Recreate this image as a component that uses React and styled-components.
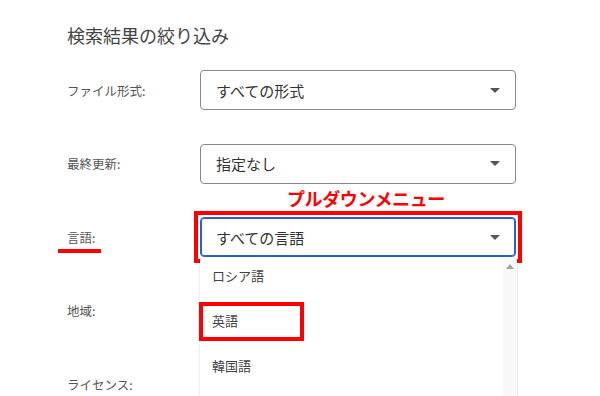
import React from "react";
import styled, { createGlobalStyle } from "styled-components";

const GlobalStyle = createGlobalStyle`
  html, body {
    margin: 0;
    padding: 0;
    background: #fff;
    overflow: hidden;
  }
  body {
    font-family: "Noto Sans CJK JP", "Noto Sans", sans-serif;
  }
`;

const Page = styled.div`
  width: 600px;
  height: 396px;
  padding: 22px 0 0 67px;
  box-sizing: border-box;
  overflow: hidden;
`;

const Title = styled.h2`
  margin: 0 0 22px;
  font-size: 18px;
  line-height: 26px;
  font-weight: 400;
  color: #444;
`;

const Form = styled.div`
  display: flex;
  flex-direction: column;
  gap: 33.5px;
`;

const Row = styled.div`
  display: grid;
  grid-template-columns: 133px 316px;
  align-items: center;
  height: 40px;
`;

const Label = styled.span`
  position: relative;
  font-size: 12.5px;
  color: #555;

  ${(p) =>
    p.$marked &&
    `
    &::after {
      content: "";
      position: absolute;
      left: -9px;
      width: 43px;
      top: 21px;
      height: 4px;
      background: #f00;
    }
  `}
`;

const SelectWrap = styled.div`
  position: relative;
  height: 40px;
  ${(p) =>
    p.$annotated &&
    `
    outline: 4px solid #f00;
    outline-offset: 2px;
  `}
`;

const Select = styled.div`
  height: 100%;
  box-sizing: border-box;
  display: flex;
  align-items: center;
  justify-content: space-between;
  padding: 0 15px 0 15px;
  border: 1px solid ${(p) => (p.$focused ? "#2b5fd6" : "#8a8a8a")};
  box-shadow: ${(p) => (p.$focused ? "inset 0 0 0 1px #2b5fd6" : "none")};
  border-radius: 4px;
  background: #fff;
  font-size: 15px;
  color: #333;
`;

const Caret = styled.span`
  width: 0;
  height: 0;
  border-left: 5px solid transparent;
  border-right: 5px solid transparent;
  border-top: 5px solid #555;
  margin-right: 0;
`;

const Callout = styled.div`
  position: absolute;
  left: 87px;
  bottom: 100%;
  margin-bottom: 8px;
  font-size: 18px;
  font-weight: 700;
  line-height: 22px;
  letter-spacing: -0.4px;
  color: #f00;
  white-space: nowrap;
`;

const Menu = styled.div`
  position: absolute;
  top: calc(100% + 1px);
  left: 0;
  width: 317px;
  height: 140px;
  background: #fff;
  box-shadow: -1px 0 2px rgba(0, 0, 0, 0.08);
  display: flex;
  z-index: 2;
`;

const Options = styled.ul`
  list-style: none;
  margin: 0;
  padding: 0;
  flex: 1;
`;

const Option = styled.li`
  position: relative;
  height: 45px;
  box-sizing: border-box;
  padding: 9px 0 0 12px;
  font-size: 13px;
  line-height: 18px;
  color: #444;

  ${(p) =>
    p.$marked &&
    `
    &::after {
      content: "";
      position: absolute;
      left: -1px;
      top: -1px;
      width: 105px;
      height: 39px;
      box-sizing: border-box;
      border: 4px solid #f00;
    }
  `}
`;

const Scrollbar = styled.div`
  width: 14px;
  background: #f8f8f8;
  box-shadow: 1px 0 1px rgba(0, 0, 0, 0.06);
  display: flex;
  justify-content: center;
  padding-top: 6px;
  box-sizing: border-box;
`;

const UpArrow = styled.span`
  width: 0;
  height: 0;
  border-left: 4px solid transparent;
  border-right: 4px solid transparent;
  border-bottom: 5px solid #a3a3a3;
`;

const languages = ["ロシア語", "英語", "韓国語"];

export default function App() {
  return (
    <>
      <GlobalStyle />
      <Page>
        <Title>検索結果の絞り込み</Title>
        <Form>
          <Row>
            <Label>ファイル形式:</Label>
            <SelectWrap>
              <Select>
                すべての形式
                <Caret />
              </Select>
            </SelectWrap>
          </Row>
          <Row>
            <Label>最終更新:</Label>
            <SelectWrap>
              <Select>
                指定なし
                <Caret />
              </Select>
            </SelectWrap>
          </Row>
          <Row>
            <Label $marked>言語:</Label>
            <SelectWrap $annotated>
              <Callout>プルダウンメニュー</Callout>
              <Select $focused>
                すべての言語
                <Caret />
              </Select>
              <Menu>
                <Options>
                  {languages.map((l) => (
                    <Option key={l} $marked={l === "英語"}>
                      {l}
                    </Option>
                  ))}
                </Options>
                <Scrollbar>
                  <UpArrow />
                </Scrollbar>
              </Menu>
            </SelectWrap>
          </Row>
          <Row>
            <Label>地域:</Label>
          </Row>
          <Row>
            <Label>ライセンス:</Label>
          </Row>
        </Form>
      </Page>
    </>
  );
}
